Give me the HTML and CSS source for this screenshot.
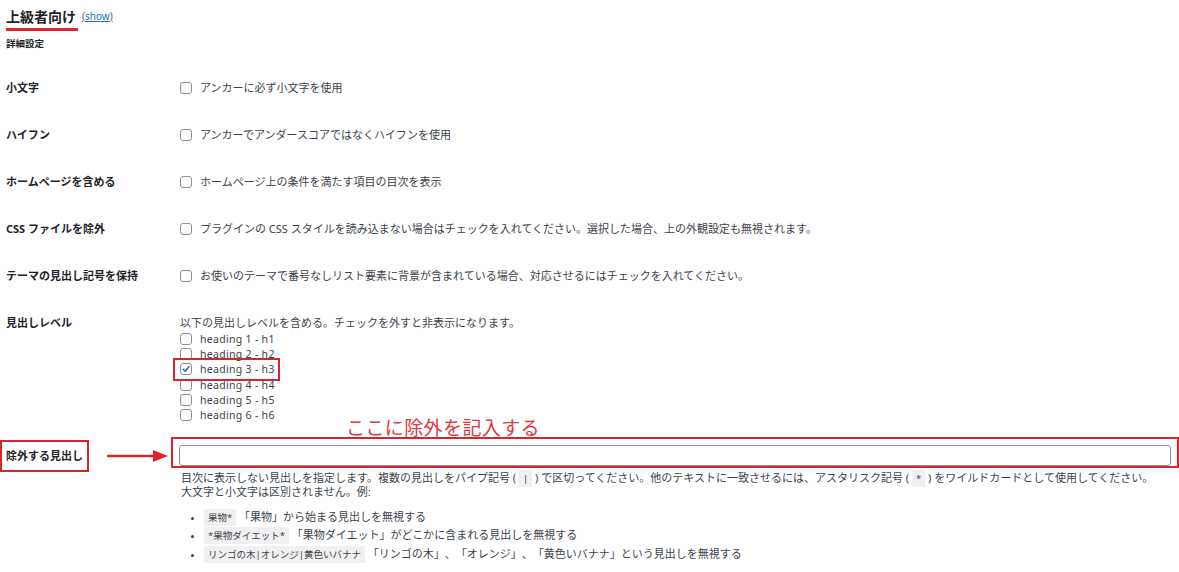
FILE: index.html
```html
<!DOCTYPE html>
<html lang="ja">
<head>
<meta charset="UTF-8" />
<meta name="viewport" content="width=device-width, initial-scale=1" />
<title>目次設定 - 上級者向け</title>
<link rel="stylesheet" href="styles.css">
</head>
<body>
  <div class="wrap">
    <h3 class="sec-title"><span class="marked">上級者向け</span><a href="#" class="toggle"><span class="paren">(</span>show<span class="paren">)</span></a></h3>
    <p class="sub">詳細設定</p>

    <table class="form-table">
      <tr>
        <th>小文字</th>
        <td><label class="opt"><span class="cb"></span>アンカーに必ず小文字を使用</label></td>
      </tr>
      <tr>
        <th>ハイフン</th>
        <td><label class="opt"><span class="cb"></span>アンカーでアンダースコアではなくハイフンを使用</label></td>
      </tr>
      <tr>
        <th>ホームページを含める</th>
        <td><label class="opt"><span class="cb"></span>ホームページ上の条件を満たす項目の目次を表示</label></td>
      </tr>
      <tr>
        <th>CSS ファイルを除外</th>
        <td><label class="opt"><span class="cb"></span>プラグインの CSS スタイルを読み込まない場合はチェックを入れてください。選択した場合、上の外観設定も無視されます。</label></td>
      </tr>
      <tr>
        <th>テーマの見出し記号を保持</th>
        <td><label class="opt"><span class="cb"></span>お使いのテーマで番号なしリスト要素に背景が含まれている場合、対応させるにはチェックを入れてください。</label></td>
      </tr>
      <tr class="levels">
        <th>見出しレベル</th>
        <td>
          <p class="desc">以下の見出しレベルを含める。チェックを外すと非表示になります。</p>
          <label class="lv"><span class="cb"></span>heading 1 - h1</label>
          <label class="lv"><span class="cb"></span>heading 2 - h2</label>
          <label class="lv marked-box"><span class="cb on"><svg viewBox="0 0 12 12" width="12" height="12"><path d="M2.6 6.2 L5 8.6 L9.6 3.2" fill="none" stroke="#2271b1" stroke-width="1.8" stroke-linecap="round" stroke-linejoin="round"/></svg></span>heading 3 - h3</label>
          <label class="lv"><span class="cb"></span>heading 4 - h4</label>
          <label class="lv"><span class="cb"></span>heading 5 - h5</label>
          <label class="lv"><span class="cb"></span>heading 6 - h6</label>
        </td>
      </tr>
      <tr class="exclude">
        <th>
          <div class="th-flex">
            <span class="label-box">除外する見出し</span>
            <svg class="arrow" viewBox="0 0 62 14" width="62" height="14"><line x1="0" y1="7" x2="48" y2="7" stroke="#e0242b" stroke-width="2.5"/><polygon points="46,1 61,7 46,13" fill="#e0242b"/></svg>
          </div>
        </th>
        <td>
          <div class="input-box">
            <span class="note">ここに除外を記入する</span>
            <input type="text" class="text-input">
          </div>
          <p class="help">目次に表示しない見出しを指定します。複数の見出しをパイプ記号 ( <code>|</code> ) で区切ってください。他のテキストに一致させるには、アスタリスク記号 ( <code>*</code> ) をワイルドカードとして使用してください。<br>大文字と小文字は区別されません。例:</p>
          <ul class="examples">
            <li><code>果物*</code> 「果物」から始まる見出しを無視する</li>
            <li><code>*果物ダイエット*</code> 「果物ダイエット」がどこかに含まれる見出しを無視する</li>
            <li><code>リンゴの木|オレンジ|黄色いバナナ</code> 「リンゴの木」、「オレンジ」、「黄色いバナナ」という見出しを無視する</li>
          </ul>
        </td>
      </tr>
    </table>
  </div>
</body>
</html>
```

FILE: styles.css
```css
body {
  margin: 0;
  background: #fff;
  color: #3c434a;
  font-family: "Noto Sans", "Noto Sans CJK JP", sans-serif;
  font-size: 11px;
  text-spacing-trim: space-all;
}
.wrap {
  padding: 0 0 0 6px;
}
.sec-title {
  margin: 0;
  padding-top: 6px;
  height: 24px;
  font-size: 14px;
  line-height: 20px;
  color: #1d2327;
  font-weight: 700;
}
.marked {
  display: inline-block;
  border-bottom: 3px solid #e0242b;
  padding-right: 2px;
  line-height: 20px;
  height: 21px;
}
.toggle {
  margin-left: 4px;
  font-size: 10px;
  font-weight: 400;
  color: #2271b1;
  vertical-align: 2px;
}
.toggle .paren {
  color: #50575e;
}
.sub {
  margin: 7px 0 0;
  font-size: 9.5px;
  font-weight: 700;
  color: #1d2327;
  line-height: 14px;
}
.form-table {
  border-collapse: collapse;
  margin-top: 14px;
}
.form-table th {
  width: 175px;
  padding: 15px 0 16px 0;
  text-align: left;
  vertical-align: top;
  font-size: 11px;
  font-weight: 700;
  color: #1d2327;
  line-height: 16px;
}
.form-table td {
  padding: 15px 0 16px 0;
  vertical-align: top;
  line-height: 16px;
}
.opt, .lv {
  display: flex;
  align-items: center;
  white-space: nowrap;
  height: 16px;
}
.cb {
  display: inline-flex;
  align-items: center;
  justify-content: center;
  width: 10px;
  height: 10px;
  border: 1px solid #8c8f94;
  border-radius: 3px;
  background: #fff;
  margin-right: 8px;
  flex: none;
}
.desc {
  margin: 0;
  height: 16px;
  line-height: 16px;
}
.lv {
  height: 15.3px;
  font-size: 10.5px;
  letter-spacing: 0.3px;
}
.marked-box {
  position: relative;
}
.marked-box::after {
  content: "";
  position: absolute;
  left: -7px;
  top: -4px;
  width: 103px;
  height: 19px;
  border: 2px solid #d9232d;
}
.levels th, .levels td {
  padding-bottom: 6px;
}
.exclude th {
  padding-top: 11px;
}
.exclude td {
  padding-top: 8px;
}
.th-flex {
  display: flex;
  align-items: center;
  margin-left: -6px;
}
.label-box {
  border: 2px solid #d9232d;
  padding: 7px 4px;
  line-height: 14px;
  height: 14px;
}
.arrow {
  margin-left: 18px;
}
.input-box {
  position: relative;
  margin-left: -9px;
  width: 992px;
  border: 2px solid #d9232d;
  padding: 6px 6px 0 6px;
}
.note {
  position: absolute;
  left: 173px;
  top: -21px;
  font-size: 19px;
  line-height: 20px;
  color: #e0393e;
  white-space: nowrap;
  font-weight: 400;
  letter-spacing: 0.4px;
}
.text-input {
  display: block;
  box-sizing: border-box;
  width: 100%;
  height: 21px;
  margin: 0;
  border: 1px solid #8c8f94;
  border-radius: 3px;
  background: #fff;
}
.help {
  margin: 3px 0 0 1px;
  line-height: 14px;
  font-size: 11px;
}
code {
  font-family: "Noto Sans", "Noto Sans CJK JP", sans-serif;
  font-size: 9.5px;
  line-height: 12px;
  background: #f0f0f1;
  padding: 2px 4px;
  color: #3c434a;
}
.examples {
  margin: 9px 0 0;
  padding-left: 24px;
  list-style: disc;
}
.examples li {
  height: 18.5px;
  line-height: 18.5px;
}
.examples li::marker {
  font-size: 9px;
}
```
